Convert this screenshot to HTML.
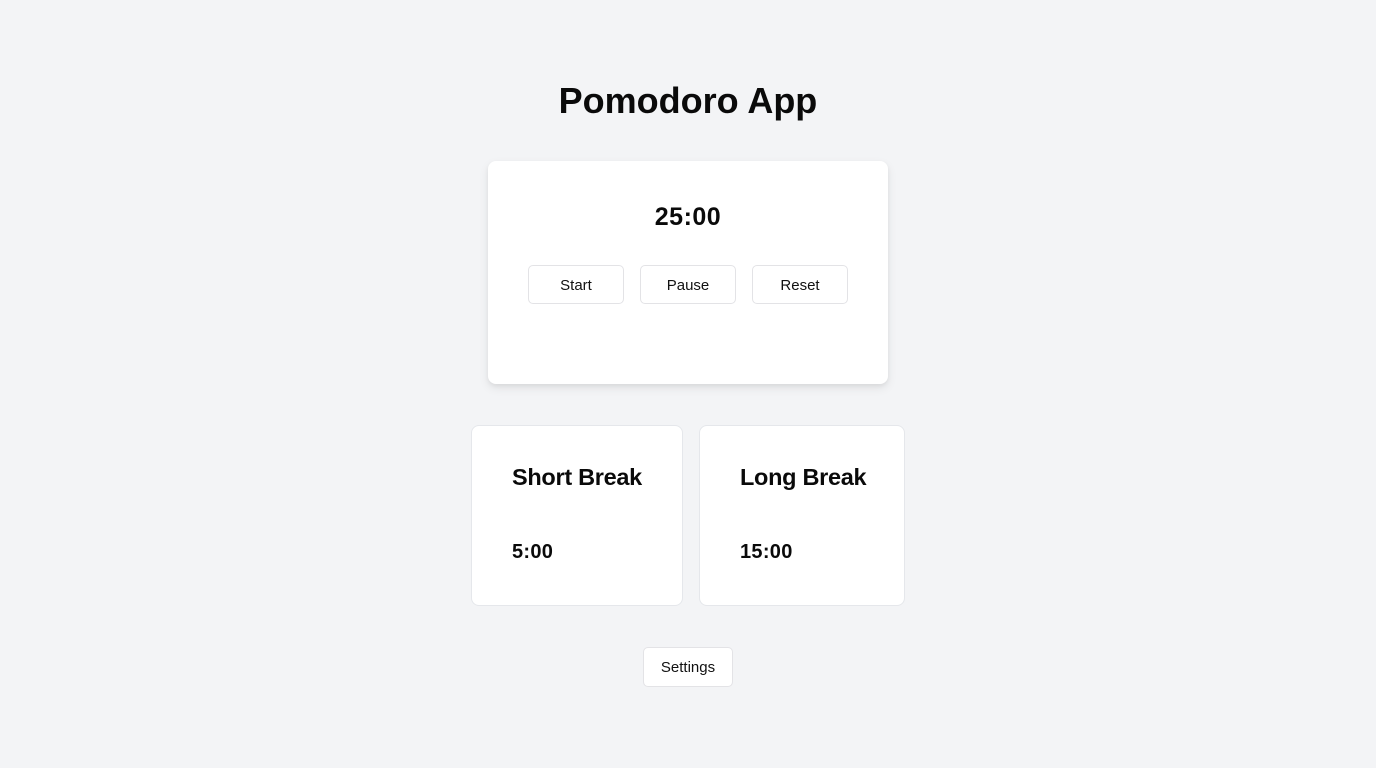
<!DOCTYPE html>
<html><head><meta charset="utf-8"><style>
*{box-sizing:border-box;margin:0;padding:0}
body{width:1376px;height:768px;background:#f3f4f6;font-family:"Liberation Sans",sans-serif;color:#0a0a0a;position:relative;overflow:hidden}
.a{position:absolute}
h1{position:absolute;left:0;width:1376px;top:79px;text-align:center;font-size:36px;font-weight:bold;line-height:44px}
.card{position:absolute;background:#fff;border-radius:8px}
.main{left:488px;top:161px;width:400px;height:223px;box-shadow:0 4px 10px rgba(0,0,0,.08),0 2px 4px rgba(0,0,0,.05)}
.btn{position:absolute;background:#fff;border:1px solid #e3e3e6;border-radius:5px;font-size:15px;text-align:center;line-height:39px;color:#111}
.brk{border:1px solid #e5e7eb}
.bh{position:absolute;left:40px;top:36px;font-size:23.5px;font-weight:bold;line-height:30px;letter-spacing:-0.3px}
.bt{position:absolute;left:40px;top:114px;font-size:20px;font-weight:bold;line-height:25px;letter-spacing:0.3px}
</style></head><body>
<h1>Pomodoro App</h1>
<div class="card main">
<div class="a" style="left:0;width:400px;top:41px;text-align:center;font-size:25px;font-weight:bold;line-height:30px;letter-spacing:0.5px">25:00</div>
<div class="btn" style="left:40px;top:104px;width:96px;height:39px">Start</div>
<div class="btn" style="left:152px;top:104px;width:96px;height:39px">Pause</div>
<div class="btn" style="left:264px;top:104px;width:96px;height:39px">Reset</div>
</div>
<div class="card brk" style="left:471px;top:425px;width:212px;height:181px"><div class="bh">Short Break</div><div class="bt">5:00</div></div>
<div class="card brk" style="left:699px;top:425px;width:206px;height:181px"><div class="bh">Long Break</div><div class="bt">15:00</div></div>
<div class="btn" style="left:643px;top:647px;width:90px;height:40px;line-height:39px">Settings</div>
</body></html>
